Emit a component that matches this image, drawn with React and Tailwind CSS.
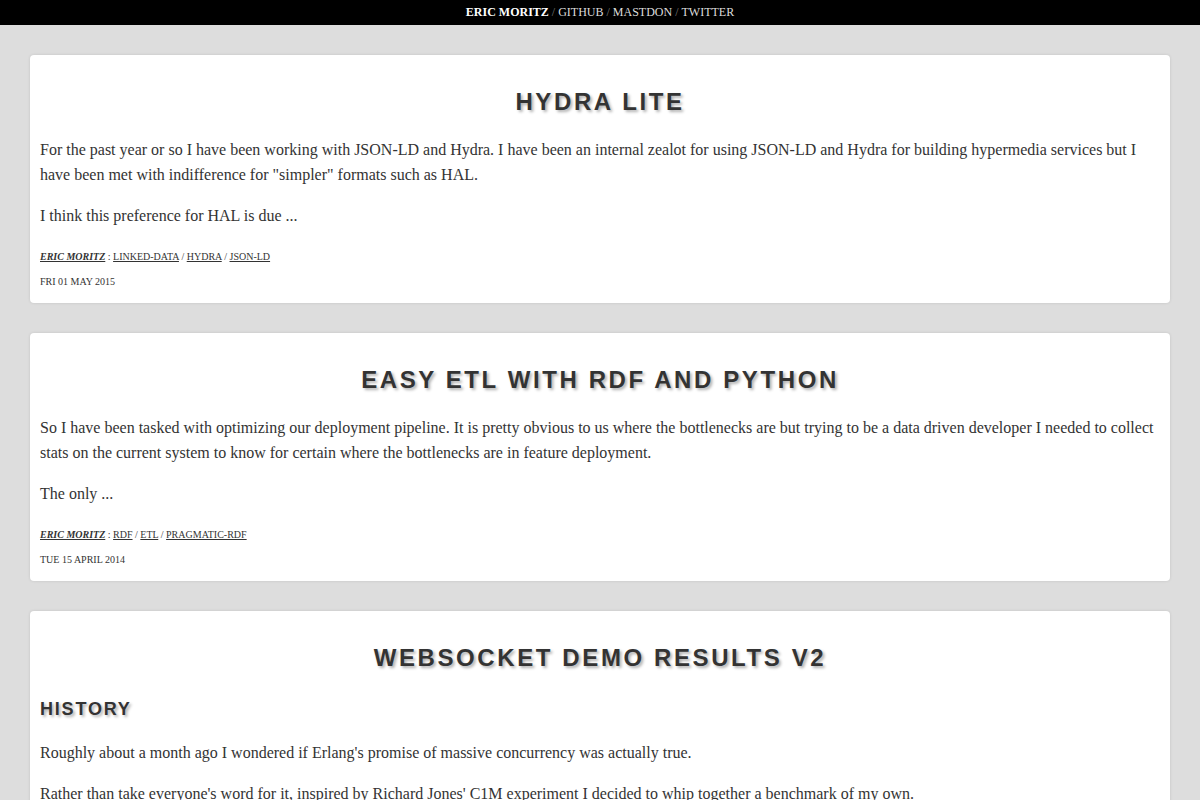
import React from 'react';

const posts = [
  {
    title: 'Hydra Lite',
    paragraphs: [
      'For the past year or so I have been working with JSON-LD and Hydra. I have been an internal zealot for using JSON-LD and Hydra for building hypermedia services but I have been met with indifference for "simpler" formats such as HAL.',
      'I think this preference for HAL is due ...',
    ],
    tags: ['linked-data', 'hydra', 'json-ld'],
    date: 'Fri 01 May 2015',
  },
  {
    title: 'Easy ETL with RDF and Python',
    paragraphs: [
      'So I have been tasked with optimizing our deployment pipeline. It is pretty obvious to us where the bottlenecks are but trying to be a data driven developer I needed to collect stats on the current system to know for certain where the bottlenecks are in feature deployment.',
      'The only ...',
    ],
    tags: ['rdf', 'etl', 'pragmatic-rdf'],
    date: 'Tue 15 April 2014',
  },
  {
    title: 'Websocket Demo Results v2',
    heading: 'History',
    paragraphs: [
      "Roughly about a month ago I wondered if Erlang's promise of massive concurrency was actually true.",
      "Rather than take everyone's word for it, inspired by Richard Jones' C1M experiment I decided to whip together a benchmark of my own.",
    ],
    tags: ['erlang', 'websockets'],
    date: 'Sat 01 June 2013',
  },
];

const Sep = () => <span className="text-[#777]">&nbsp;/&nbsp;</span>;

const Header = () => (
  <div className="bg-black h-[25px] leading-[25px] text-center text-[12px] uppercase text-[#ddd]">
    <a href="#" className="font-bold text-white">Eric Moritz</a>
    <Sep />
    <a href="#">Github</a>
    <Sep />
    <a href="#">Mastdon</a>
    <Sep />
    <a href="#">Twitter</a>
  </div>
);

const Post = ({ post }) => (
  <article className="bg-white rounded-[4px] shadow-[0_0_3px_rgba(0,0,0,0.12)] px-[10px] pt-[32px] pb-[9px]">
    <h1 className="text-center font-['Liberation_Sans',Arial,sans-serif] font-bold uppercase text-[24px] leading-[29px] tracking-[2.6px] text-[#333] [text-shadow:2px_2px_3px_#b0b0b0]">
      {post.title}
    </h1>
    {post.heading && (
      <h2 className="mt-[26px] font-['Liberation_Sans',Arial,sans-serif] font-bold uppercase text-[18px] leading-[22px] tracking-[1.8px] text-[#333] [text-shadow:2px_2px_3px_#b0b0b0]">
        {post.heading}
      </h2>
    )}
    <div className={post.heading ? 'mt-[20px]' : 'mt-[21px]'}>
      {post.paragraphs.map((p, i) => (
        <p key={i} className="text-[16px] leading-[25px] text-[#333] mb-[16px]">
          {p}
        </p>
      ))}
    </div>
    <p className="text-[10px] leading-[25px] uppercase text-[#333]">
      <a href="#" className="italic font-bold underline">Eric Moritz</a>
      <span> : </span>
      {post.tags.map((t, i) => (
        <React.Fragment key={t}>
          {i > 0 && <span> / </span>}
          <a href="#" className="underline">{t}</a>
        </React.Fragment>
      ))}
    </p>
    <p className="text-[10px] leading-[25px] uppercase text-[#333]">{post.date}</p>
  </article>
);

export default function App() {
  return (
    <div className="min-h-screen bg-[#dddddd] font-['Liberation_Serif','Times_New_Roman',serif]">
      <Header />
      <main className="px-[30px] pt-[30px] pb-[30px] flex flex-col gap-[30px]">
        {posts.map((post) => (
          <Post key={post.title} post={post} />
        ))}
      </main>
    </div>
  );
}
